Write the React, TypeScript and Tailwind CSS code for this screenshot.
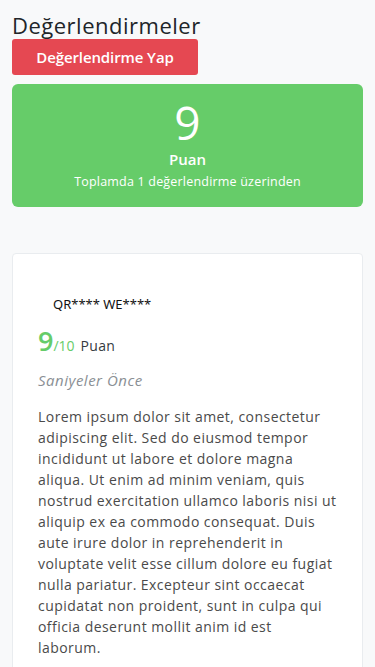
const body =
  "Lorem ipsum dolor sit amet, consectetur adipiscing elit. Sed do eiusmod tempor incididunt ut labore et dolore magna aliqua. Ut enim ad minim veniam, quis nostrud exercitation ullamco laboris nisi ut aliquip ex ea commodo consequat. Duis aute irure dolor in reprehenderit in voluptate velit esse cillum dolore eu fugiat nulla pariatur. Excepteur sint occaecat cupidatat non proident, sunt in culpa qui officia deserunt mollit anim id est laborum.";

export default function App() {
  return (
    <div className="min-h-[667px] bg-[#f8f9fa] px-3 pt-[12px] font-['Open_Sans',sans-serif] text-[#212529]">
      <h1 className="text-[22px] leading-[26px] tracking-[0.5px]">Değerlendirmeler</h1>
      <button className="mt-[1px] h-[36px] w-[186px] rounded-[3px] bg-[#e54852] text-[15px] font-semibold tracking-[-0.1px] text-white">
        Değerlendirme Yap
      </button>
      <div className="mt-[9px] flex h-[123px] flex-col items-center rounded-[6px] bg-[#66cc69] pt-[10px] text-white">
        <div className="text-[46px] leading-[56px]">9</div>
        <div className="text-[15px] font-semibold leading-[18px]">Puan</div>
        <div className="mt-[6px] text-[12.5px] leading-[16px] tracking-[0.2px]">Toplamda 1 değerlendirme üzerinden</div>
      </div>
      <div className="mt-[46px] rounded-[4px] border border-[#e9ecef] bg-white px-[25px] pb-6 pt-[40px]">
        <div className="pl-[15px] font-['Noto_Sans',sans-serif] text-[13px] leading-[20px] text-[#111]">
          QR**** WE****
        </div>
        <div className="mt-[12px] flex items-baseline">
          <span className="text-[27px] font-semibold leading-[30px] text-[#66cc69]">9</span>
          <span className="text-[14px] font-medium text-[#66cc69]">/10</span>
          <span className="ml-[6px] text-[14px] tracking-[0.3px] text-[#343a40]">Puan</span>
        </div>
        <div className="mt-[14px] text-[15px] italic leading-[20px] tracking-[0.5px] text-[#8a8f94]">Saniyeler Önce</div>
        <p className="mt-[16px] text-[14px] leading-[21px] tracking-[0.45px] text-[#4a4a4a]">{body}</p>
      </div>
    </div>
  );
}
